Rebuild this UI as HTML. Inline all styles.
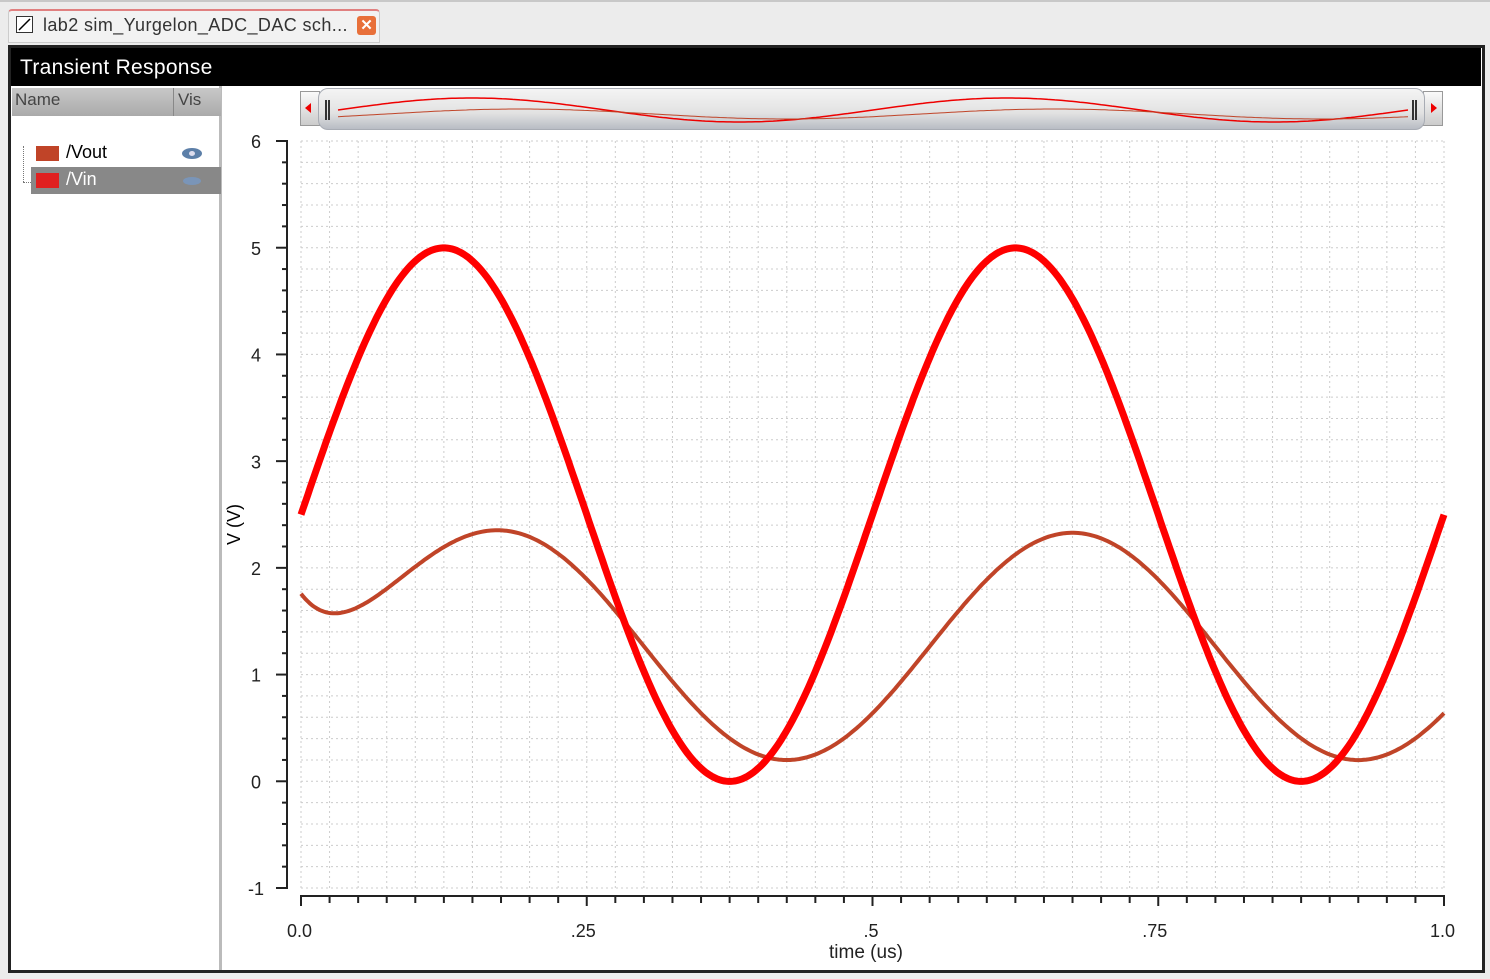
<!DOCTYPE html>
<html><head><meta charset="utf-8"><style>
body{margin:0;width:1490px;height:979px;background:#ececec;font-family:"Liberation Sans",sans-serif;overflow:hidden;position:relative}
.abs{position:absolute}
</style></head><body>
<div class="abs" style="left:0;top:0;width:1490px;height:2px;background:#c8c8c8"></div>
<div class="abs" style="left:8px;top:9px;width:372px;height:34px;background:#f2f2f2;border:1px solid #ccc;border-top:2px solid #e08080;border-radius:4px 4px 0 0;box-sizing:border-box"></div>
<div class="abs" style="left:16px;top:16px;width:17px;height:17px;border:1px solid #333;box-sizing:border-box;background:#fff"><svg width="15" height="15" class="abs" style="left:0;top:0"><path d="M2 13 L13 2" stroke="#000" stroke-width="1.5"/></svg></div>
<div class="abs" style="left:43px;top:15px;font-size:18px;letter-spacing:0.4px;color:#333">lab2 sim_Yurgelon_ADC_DAC sch...</div>
<div class="abs" style="left:357px;top:16px;width:19px;height:19px;background:#e8703a;border-radius:3px;color:#fff;font-size:15px;font-weight:bold;text-align:center;line-height:19px">✕</div>
<div class="abs" style="left:8px;top:45px;width:1477px;height:928px;border:3px solid #222;box-sizing:border-box;background:#fff"></div>
<div class="abs" style="left:11px;top:48px;width:1470px;height:38px;background:#000;color:#fff;font-size:21px;letter-spacing:0.3px;line-height:40px;padding-left:9px;box-sizing:border-box">Transient Response</div>
<div class="abs" style="left:11px;top:86px;width:211px;height:884px;background:#fff;border-right:3px solid #bbb;box-sizing:border-box"></div>
<div class="abs" style="left:12px;top:88px;width:209px;height:28px;background:linear-gradient(#c8c8c8,#aaa);font-size:17px;color:#444"><span class="abs" style="left:3px;top:2px">Name</span><span class="abs" style="left:161px;top:0;width:1px;height:28px;background:#888"></span><span class="abs" style="left:166px;top:2px">Vis</span></div>
<div class="abs" style="left:23px;top:146px;width:1px;height:36px;border-left:1px dotted #777"></div>
<div class="abs" style="left:23px;top:182px;width:8px;border-top:1px dotted #777"></div>
<div class="abs" style="left:36px;top:146px;width:23px;height:15px;background:#c04428"></div>
<div class="abs" style="left:66px;top:142px;font-size:18px;color:#000">/Vout</div>
<div class="abs" style="left:182px;top:148px;width:20px;height:11px;border-radius:50%;background:#5c7fa8"><div class="abs" style="left:7px;top:3px;width:6px;height:5px;border-radius:50%;background:#dde"></div></div>
<div class="abs" style="left:31px;top:167px;width:190px;height:27px;background:#888"></div>
<div class="abs" style="left:36px;top:173px;width:23px;height:15px;background:#e02020"></div>
<div class="abs" style="left:66px;top:169px;font-size:18px;color:#fff">/Vin</div>
<div class="abs" style="left:183px;top:177px;width:18px;height:8px;border-radius:50%;background:#7a95b8"></div>
<div class="abs" style="left:300px;top:91px;width:20px;height:35px;background:linear-gradient(#fafafa,#ccc);border:1px solid #999;box-sizing:border-box"><span class="abs" style="left:4px;top:11px;width:0;height:0;border-top:5px solid transparent;border-bottom:5px solid transparent;border-right:6px solid #e00"></span></div>
<div class="abs" style="left:1423px;top:91px;width:20px;height:35px;background:linear-gradient(#fafafa,#ccc);border:1px solid #999;box-sizing:border-box"><span class="abs" style="left:7px;top:11px;width:0;height:0;border-top:5px solid transparent;border-bottom:5px solid transparent;border-left:6px solid #e00"></span></div>
<div class="abs" style="left:318px;top:88px;width:1107px;height:42px;background:linear-gradient(#f4f4f4,#e2e2e2 60%,#b8bcc4);border-radius:10px;border:1px solid #a8acb4;box-sizing:border-box"></div>
<div class="abs" style="left:325px;top:100px;width:5px;height:20px;border-left:2px solid #333;border-right:2px solid #333;box-sizing:border-box"></div>
<div class="abs" style="left:1412px;top:100px;width:5px;height:20px;border-left:2px solid #333;border-right:2px solid #333;box-sizing:border-box"></div>
<svg class="abs" style="left:0;top:0" width="1490" height="979" id="sv"></svg>
<div class="abs" style="left:224px;top:545px;font-size:18px;transform:rotate(-90deg);transform-origin:left top;color:#000">V (V)</div>
<div class="abs" style="left:829px;top:942px;font-size:19px;color:#222">time (us)</div>
<script>
var s='';var X0=301,X1=1444,Y=function(v){return 781.4-106.7*v};
for(var i=0;i<=40;i++){var x=X0+(X1-X0)*i/40;s+='<line x1="'+x+'" y1="141" x2="'+x+'" y2="888" stroke="#ccc" stroke-dasharray="2,3"/>';}
for(var i=0;i<=35;i++){var y=141+747*i/35;s+='<line x1="301" y1="'+y+'" x2="1444" y2="'+y+'" stroke="#ccc" stroke-dasharray="2,3"/>';}
s+='<path d="M276 141H287V888H276" fill="none" stroke="#222" stroke-width="2"/>';
for(var i=0;i<=35;i++){var y=141+747*i/35;var l=(i%5==0)?11:5;s+='<line x1="'+(287-l)+'" y1="'+y+'" x2="287" y2="'+y+'" stroke="#222" stroke-width="2"/>';}
for(var v=-1;v<=6;v++){s+='<text x="'+(v<0?248:251)+'" y="'+(Y(v)+7)+'" font-size="18" fill="#222">'+v+'</text>';}
s+='<path d="M301 906V896H1444V906" fill="none" stroke="#222" stroke-width="2"/>';
for(var i=0;i<=40;i++){var x=X0+(X1-X0)*i/40;s+='<line x1="'+x+'" y1="896" x2="'+x+'" y2="'+(i%10==0?906:903)+'" stroke="#222" stroke-width="2"/>';}
[['0.0',0,-14],['.25',.25,-16],['.5',.5,-9],['.75',.75,-16],['1.0',1,-14]].forEach(function(a){s+='<text x="'+(X0+(X1-X0)*a[1]+a[2])+'" y="937" font-size="18" fill="#222">'+a[0]+'</text>';});
function vin2(t){return 2.5+2.5*Math.sin(4*Math.PI*t)}
function vout(t){return 1.265+1.065*Math.sin(2*Math.PI*(t-0.05)/0.5)+1.12*Math.exp(-t/0.045)}
var p1='',p2='';
for(var i=0;i<=500;i++){var t=i/500,x=X0+(X1-X0)*t;p1+=(i?'L':'M')+x.toFixed(1)+' '+Y(vin2(t)).toFixed(1);p2+=(i?'L':'M')+x.toFixed(1)+' '+Y(vout(t)).toFixed(1);}
var a='',b='';
for(var i=0;i<=300;i++){var t=i/300,x=338+1070*t;a+=(i?'L':'M')+x.toFixed(1)+' '+(110-12*Math.sin(4*Math.PI*t)).toFixed(1);b+=(i?'L':'M')+x.toFixed(1)+' '+(114-5*Math.sin(4*Math.PI*(t-0.045))).toFixed(1);}
s+='<path d="'+a+'" fill="none" stroke="#e00" stroke-width="1.5"/><path d="'+b+'" fill="none" stroke="#c04428" stroke-width="1"/>';
s+='<path d="'+p2+'" fill="none" stroke="#c04428" stroke-width="4"/>';
s+='<path d="'+p1+'" fill="none" stroke="#ff0000" stroke-width="7"/>';
document.getElementById('sv').innerHTML=s;
</script>
</body></html>
